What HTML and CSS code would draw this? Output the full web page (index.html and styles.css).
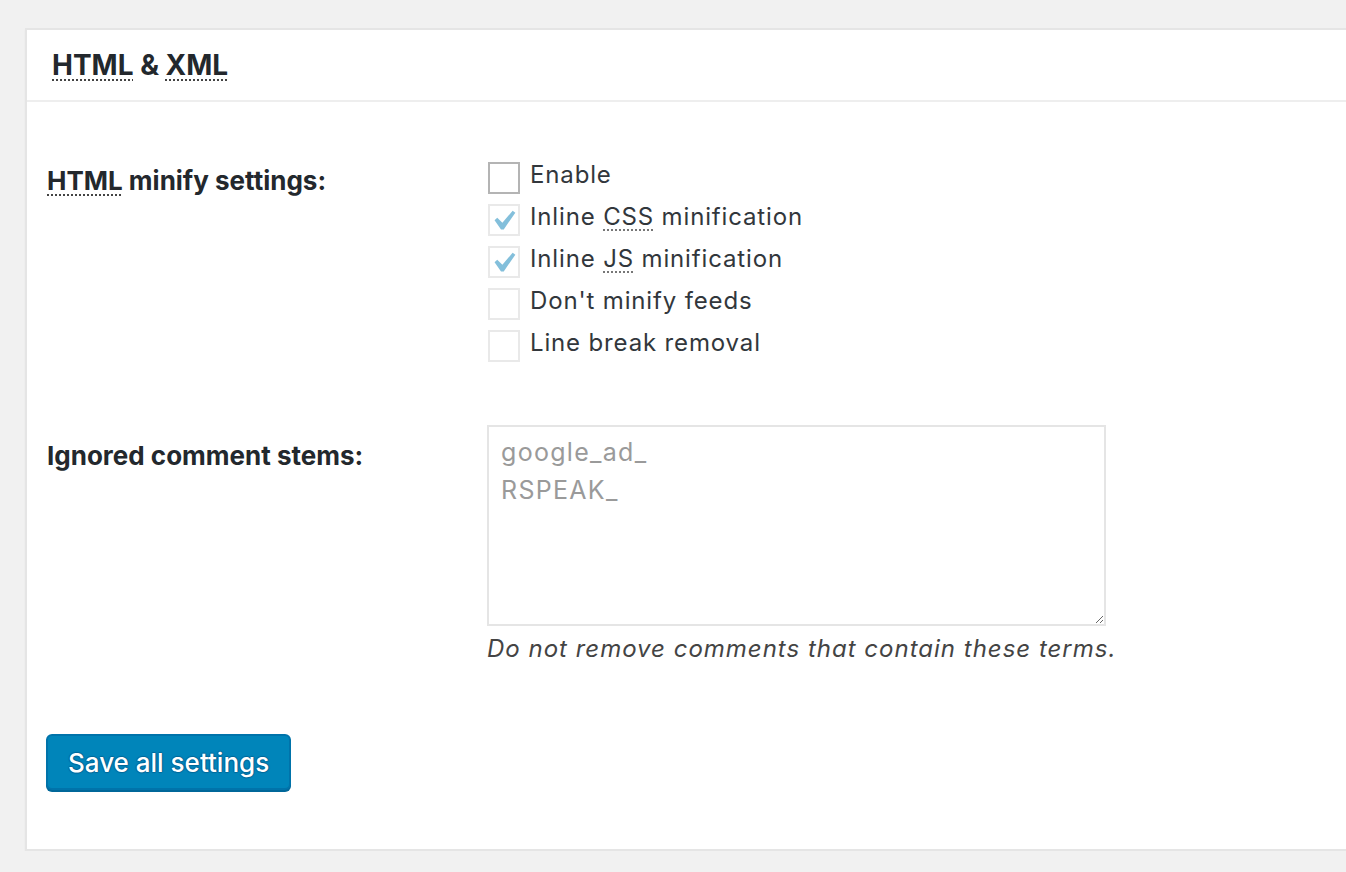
FILE: index.html
```html
<!DOCTYPE html>
<html lang="en">
<head>
<meta charset="utf-8">
<title>HTML &amp; XML</title>
<link rel="stylesheet" href="styles.css">
</head>
<body>
<div class="card">
  <div class="card-header">
    <h2 class="card-title"><abbr class="abbr" title="Hypertext Markup Language">HTML</abbr> &amp; <abbr class="abbr" title="eXtensible Markup Language">XML</abbr></h2>
  </div>
  <div class="card-body">
    <div class="form-row row-checks">
      <div class="row-label"><abbr class="abbr" title="Hypertext Markup Language">HTML</abbr> minify settings:</div>
      <div class="row-field">
        <div class="check-item">
          <span class="checkbox checkbox-active"></span>
          <span class="check-text">Enable</span>
        </div>
        <div class="check-item">
          <span class="checkbox checkbox-muted">
            <svg class="check-mark" viewBox="0 0 20 20" width="40" height="40"><path d="M14.83 4.89l1.34.94-5.81 8.38H9.02L5.78 9.67l1.34-1.25 2.57 2.4z"/></svg>
          </span>
          <span class="check-text">Inline <abbr class="abbr abbr-light" title="Cascading Style Sheet">CSS</abbr> minification</span>
        </div>
        <div class="check-item">
          <span class="checkbox checkbox-muted">
            <svg class="check-mark" viewBox="0 0 20 20" width="40" height="40"><path d="M14.83 4.89l1.34.94-5.81 8.38H9.02L5.78 9.67l1.34-1.25 2.57 2.4z"/></svg>
          </span>
          <span class="check-text">Inline <abbr class="abbr abbr-light" title="JavaScript">JS</abbr> minification</span>
        </div>
        <div class="check-item">
          <span class="checkbox checkbox-muted"></span>
          <span class="check-text">Don't minify feeds</span>
        </div>
        <div class="check-item">
          <span class="checkbox checkbox-muted"></span>
          <span class="check-text">Line break removal</span>
        </div>
      </div>
    </div>
    <div class="form-row row-textarea">
      <div class="row-label row-label-ta">Ignored comment stems:</div>
      <div class="row-field">
        <textarea class="stems" rows="5" cols="40" disabled>google_ad_
RSPEAK_</textarea>
        <p class="description">Do not remove comments that contain these terms.</p>
      </div>
    </div>
    <div class="actions">
      <button class="button-primary" type="button">Save all settings</button>
    </div>
  </div>
</div>
</body>
</html>
```

FILE: styles.css
```css
html, body {
  margin: 0;
  padding: 0;
}

body {
  background: #f1f1f1;
  overflow: hidden;
  font-family: Inter, "Liberation Sans", Arial, sans-serif;
  color: #444;
}

.card {
  margin: 28px 0 0 25px;
  width: 1400px;
  height: 819px;
  background: #fff;
  border: 2px solid #e5e5e5;
  box-shadow: 0 2px 2px rgba(0, 0, 0, 0.04);
}

.card-header {
  height: 70px;
  border-bottom: 2px solid #eeeeee;
  padding-left: 25px;
}

.card-title {
  margin: 0;
  font-size: 28px;
  line-height: 70px;
  font-weight: 700;
  color: #23282d;
}

.abbr {
  text-decoration: underline dotted #444;
  text-decoration-thickness: 2px;
  text-underline-offset: 4px;
}

.abbr-light {
  text-decoration-color: #777;
}

.card-body {
  padding: 60px 0 0 20px;
}

.form-row {
  display: grid;
  grid-template-columns: 440px 1fr;
}

.row-label {
  font-size: 26px;
  line-height: 32px;
  font-weight: 700;
  color: #23282d;
  padding-top: 3px;
}

.row-label-ta {
  padding-top: 15px;
}

.check-item {
  display: flex;
  align-items: flex-start;
  height: 32px;
  margin-bottom: 10px;
  margin-left: 1px;
}

.checkbox {
  position: relative;
  box-sizing: border-box;
  width: 32px;
  height: 32px;
  border: 2px solid #e9e9e9;
  background: #fff;
  margin-right: 10px;
  flex: none;
}

.checkbox-active {
  border-color: #b4b4b4;
}

.check-mark {
  position: absolute;
  left: -7px;
  top: -5px;
  fill: #1e8cbe;
  opacity: 0.55;
}

.check-text {
  font-size: 24px;
  line-height: 25px;
  color: #32373c;
  letter-spacing: 0.85px;
}

.row-textarea {
  margin-top: 53px;
}

.stems {
  display: block;
  box-sizing: border-box;
  width: 619px;
  height: 201px;
  margin: 0;
  padding: 6px 12px;
  border: 2px solid #e5e5e5;
  background: #fff;
  font-family: Inter, "Liberation Sans", Arial, sans-serif;
  font-size: 25px;
  line-height: 38px;
  color: #9a9a9a;
  letter-spacing: 1.3px;
  resize: both;
}

.description {
  margin: 8px 0 0 0;
  font-size: 24px;
  line-height: 30px;
  font-style: italic;
  color: #444;
  letter-spacing: 1px;
}

.actions {
  margin-top: 70px;
}

.button-primary {
  box-sizing: border-box;
  height: 56px;
  margin-left: -1px;
  padding: 0 20px;
  white-space: nowrap;
  background: #0085ba;
  border: 2px solid #0073aa;
  border-radius: 6px;
  box-shadow: 0 2px 0 #006799;
  color: #fff;
  font-family: Inter, "Liberation Sans", Arial, sans-serif;
  font-size: 26px;
  font-weight: 500;
  text-shadow: 0 -1px 1px #006799, 1px 0 1px #006799, 0 1px 1px #006799, -1px 0 1px #006799;
  cursor: pointer;
}
```
